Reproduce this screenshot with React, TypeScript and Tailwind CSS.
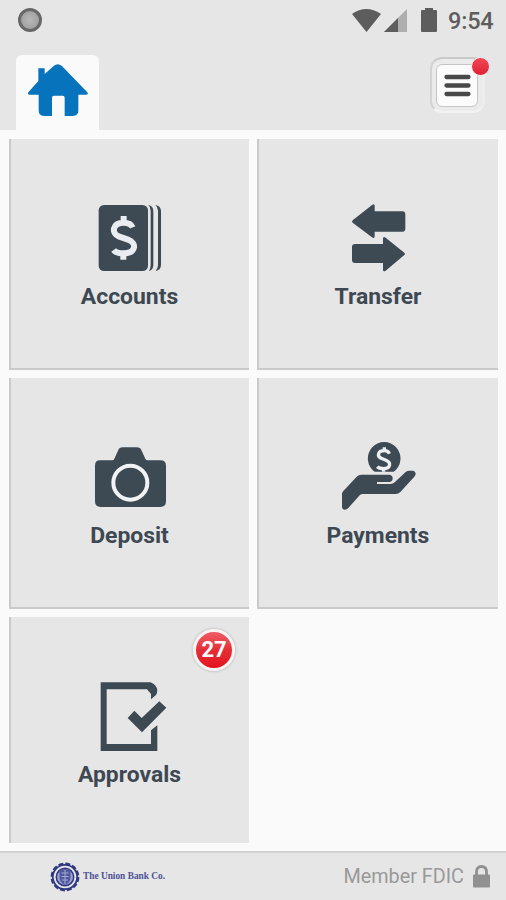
import type { ReactNode } from 'react';

const INK = '#3d4a54';

function AccountsIcon() {
  return (
    <svg viewBox="57 24 240 240" className="size-20" fill={INK}>
      <rect x="86" y="45" width="148" height="198" rx="16" />
      <path d="M235 45q15 3 15 19v160q0 16-13 19q5-8 5-18V62q0-11-7-17z" />
      <path d="M256 45q17 3 17 19v160q0 16-16 19q7-8 7-18V62q0-11-8-17z" />
      <path
        d="M188 112Q182 98 161 98C126 98 124 131 146 139L174 149C202 159 198 190 160 190Q138 190 131 180M161 78v20M160 190v19"
        fill="none"
        stroke="#e9edf2"
        strokeWidth="18"
      />
    </svg>
  );
}

function TransferIcon() {
  return (
    <svg viewBox="54 24 240 240" className="size-20" fill={INK}>
      <path d="M98 91L156 45q8-5 8 3v16h83q9 0 9 9v43q0 9-9 9h-83v14q0 8-8 3L98 98q-4-3 0-7z" />
      <path d="M253 188L197 143q-8-5-8 3v16h-84q-9 0-9 9v39q0 9 9 9h84v20q0 8 8 3l56-47q4-3 0-7z" />
    </svg>
  );
}

function DepositIcon() {
  return (
    <svg viewBox="57 21 240 240" className="size-20" fill={INK}>
      <path d="M90 91h37q4 0 6-5l11-24q4-10 14-10h42q11 0 15 10l11 24q2 5 6 5h39q17 0 17 16v107q0 17-17 17H92q-17 0-17-17V107q0-16 15-16z" />
      <circle cx="181" cy="158" r="51" fill="none" stroke="#f1f3f4" strokeWidth="12" />
    </svg>
  );
}

function PaymentsIcon() {
  return (
    <svg viewBox="54 21 240 240" className="size-20" fill={INK}>
      <path d="M164 125A49 49 0 1 1 221 125z" />
      <path
        d="M208 71Q205 62 193 62C172 62 171 80 184 85L198 91C216 99 210 116 191 116Q177 116 172 110M193 52v11M191 115v10"
        fill="none"
        stroke="#edf0f2"
        strokeWidth="10"
      />
      <path d="M124 134h85q9 2 9 11 0 10-9 11h-38v6h41q7 0 12-5l33-31q5-4 11-4h11q8 2 8 9 0 5-4 9l-42 46q-6 6-14 6H129q-6 0-10 4l-34 38q-4 5-11 5-8-1-8-9v-38q0-5 4-9l40-43q6-6 14-6z" />
    </svg>
  );
}

function ApprovalsIcon() {
  return (
    <svg viewBox="57 168 240 240" className="size-20" fill={INK}>
      <path d="M92 187h150q18 8 20 24 0 8-4 14l-15 13v-16l-12-14H110v164h133v-41l19-15v77H92z" />
      <path d="M173 294l20-22 22 22 53-50 21 19-73 74z" />
    </svg>
  );
}

function Tile({
  label,
  icon,
  badge,
  last,
}: {
  label: string;
  icon: ReactNode;
  badge?: string;
  last?: boolean;
}) {
  return (
    <button
      className={
        'relative flex flex-col items-center border-l-2 border-[#cacaca] bg-[#e6e6e6] pt-[59px] pr-0.5 ' +
        (last ? 'h-[226px]' : 'h-[231px] border-b-2')
      }
    >
      {icon}
      <span className="-mr-px mt-[3.500px] text-[22.900px] leading-[30px] font-bold text-[#3d4852]">{label}</span>
      {badge && (
        <span className="absolute top-3 right-[14px] flex size-[42px] items-center justify-center rounded-full border-[3px] border-[#f8f4f4] bg-linear-to-b from-[#ee5c65] via-[#e52d37] to-[#e3111c] text-[22px] leading-none font-bold text-white shadow-[0_0_3px_#aaa]">
          {badge}
        </span>
      )}
    </button>
  );
}

function StatusBar() {
  return (
    <div className="flex h-10 items-center justify-between pr-3 pl-[18px]">
      <span className="size-6 rounded-full border-[3.5px] border-[#686868] bg-[radial-gradient(circle,#b8b8b8,#999)]" />
      <div className="flex items-center">
        <svg viewBox="0 0 90 26" className="h-[26px] w-[90px]" fill="#5d5d5d">
          <path d="M1 7Q15-3 30 7L15.500 25z" />
          <path d="M56 2v23H33z" fill="#aeaeae" />
          <path d="M47 11v14H33z" />
          <path d="M74 1h8v2h3q1 0 1 1v20q0 1-1 1H71q-1 0-1-1V4q0-1 1-1h3z" />
        </svg>
        <span className="mt-[3px] ml-[7px] w-[46px] text-[23.500px] leading-none font-medium tracking-[-0.2px] whitespace-nowrap text-[#5d5d5d]">
          9:54
        </span>
      </div>
    </div>
  );
}

function Header() {
  return (
    <header className="h-[130px] bg-[#e6e6e6]">
      <StatusBar />
      <div className="flex h-[90px] items-start justify-between pt-[15px] pr-[21px] pl-4">
        <div className="h-[75px] w-[83px] rounded-t-md bg-[#fafafa] pt-2 pl-3">
          <svg viewBox="84 189 180 162" className="h-[54px] w-[60px]" fill="#0873bd">
            <path d="M115 205h19v17l28-25q11-9 23 0l77 80q4 7-4 7h-23v47q0 17-17 17h-24v-55q0-6-6-6h-26q-6 0-6 6v55h-24q-16 0-16-17v-47H89q-8 0-4-7l30-34z" />
          </svg>
        </div>
        <button className="relative mt-0.5 h-14 w-[55px] rounded-xl border-2 border-t-[#c9c9c9] border-r-[#eeeeee] border-b-[#f3f3f3] border-l-[#d3d3d3] bg-[#ebebeb] px-1 py-[5px]">
          <span className="flex h-[43px] w-[42px] items-center justify-center rounded-md border border-[#c6c6c6] bg-[#fbfbfb]">
            <svg viewBox="0 0 27 23" className="h-[23px] w-[27px]" stroke="#484848" strokeWidth="4.300" strokeLinecap="round">
              <path d="M2.500 3h22M2.500 11.500h22M2.500 20h22" />
            </svg>
          </span>
          <span className="absolute -top-0.5 -right-[7px] size-[19px] rounded-full border-[1.500px] border-[#f9e8ea] bg-linear-to-b from-[#f04656] to-[#e01f35]" />
        </button>
      </div>
    </header>
  );
}

function BankSeal() {
  return (
    <svg viewBox="0 0 30 30" className="size-[30px]" fill="none" stroke="#303883">
      <circle cx="15" cy="15" r="13.200" strokeWidth="2.400" strokeDasharray="4.900 2" />
      <circle cx="15" cy="15" r="12.200" strokeWidth="1.800" />
      <circle cx="15" cy="15" r="8.700" strokeWidth="1.500" fill="#9ca2cf" />
      <path d="M9.500 8.500q5.500-3 11 0v7q0 5-5.500 7.500-5.500-2.500-5.500-7.500z" fill="#525a9f" stroke="none" />
      <path d="M15 8v14M11.500 11h7M11.500 14.500h7M12 18h6" stroke="#a5aad2" strokeWidth="1" />
    </svg>
  );
}

function Footer() {
  return (
    <footer className="flex h-[49px] items-center justify-between border-t-2 border-[#d1d1d1] bg-[#e6e6e6] pr-4 pl-[50px]">
      <div className="flex items-center gap-[3px]">
        <BankSeal />
        <span className="font-['Liberation_Serif',serif] text-[9.350px] font-bold whitespace-nowrap text-[#4c5293]">
          The Union Bank Co.
        </span>
      </div>
      <div className="flex items-center gap-[9px]">
        <span className="mt-px text-[19.800px] leading-none whitespace-nowrap text-[#999]">Member FDIC</span>
        <svg viewBox="0 0 17 23" className="h-[23px] w-[17px]">
          <path d="M3.500 11V7q0-5.500 5-5.500t5 5.500v4" fill="none" stroke="#919191" strokeWidth="2.800" />
          <rect y="9.500" width="17" height="13" rx="1" fill="#919191" />
        </svg>
      </div>
    </footer>
  );
}

export default function App() {
  return (
    <div className="flex h-[900px] w-[506px] flex-col overflow-hidden bg-[#fafafa] font-[Roboto,sans-serif]">
      <Header />
      <main className="grid flex-1 grid-cols-[240px_241px] content-start gap-2 pt-[9px] pl-[9px]">
        <Tile label="Accounts" icon={<AccountsIcon />} />
        <Tile label="Transfer" icon={<TransferIcon />} />
        <Tile label="Deposit" icon={<DepositIcon />} />
        <Tile label="Payments" icon={<PaymentsIcon />} />
        <Tile label="Approvals" icon={<ApprovalsIcon />} badge="27" last />
      </main>
      <Footer />
    </div>
  );
}
